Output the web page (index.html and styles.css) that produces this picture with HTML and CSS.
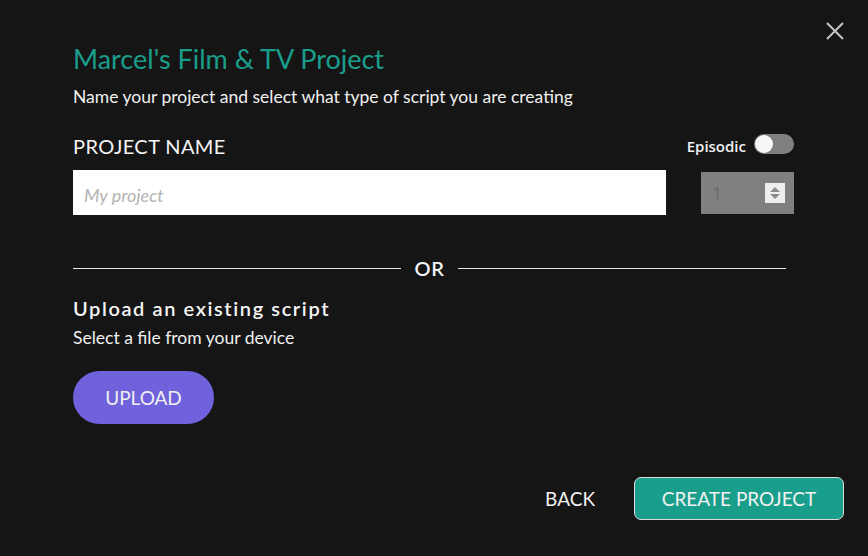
FILE: index.html
```html
<!DOCTYPE html>
<html lang="en">
<head>
<meta charset="utf-8">
<title>New project</title>
<link rel="stylesheet" href="styles.css">
</head>
<body>
<div class="dialog">
  <button class="close" aria-label="Close">
    <svg width="18" height="18" viewBox="0 0 18 18"><path d="M1 1L17 17M17 1L1 17" stroke="#c4c4c4" stroke-width="2" fill="none"/></svg>
  </button>
  <div class="content">
    <h1 class="title">Marcel's Film &amp; TV Project</h1>
    <p class="subtitle">Name your project and select what type of script you are creating</p>
    <div class="label-row">
      <span class="label">PROJECT NAME</span>
      <div class="episodic">
        <span class="episodic-text">Episodic</span>
        <span class="toggle"><span class="knob"></span></span>
      </div>
    </div>
    <div class="input-row">
      <div class="name-input"><span class="placeholder">My project</span></div>
      <div class="number-input">
        <span class="number">1</span>
        <svg class="spinner" width="20" height="20" viewBox="0 0 20 20"><rect width="20" height="20" fill="#eeeeee"/><path d="M5 9L10 4L15 9Z" fill="#8c8c8c"/><path d="M5 11L10 16L15 11Z" fill="#8c8c8c"/></svg>
      </div>
    </div>
    <div class="divider">
      <span class="line"></span>
      <span class="or">OR</span>
      <span class="line"></span>
    </div>
    <h2 class="upload-title">Upload an existing script</h2>
    <p class="upload-sub">Select a file from your device</p>
    <button class="upload-btn">UPLOAD</button>
  </div>
  <div class="footer">
    <button class="back-btn">BACK</button>
    <button class="create-btn">CREATE PROJECT</button>
  </div>
</div>
</body>
</html>
```
FILE: styles.css
```css
html, body {
  margin: 0;
  padding: 0;
  background: #151515;
}
body {
  font-family: Lato, "Open Sans", sans-serif;
  color: #f2f2f2;
}
.dialog {
  position: relative;
  box-sizing: border-box;
  width: 868px;
  height: 556px;
  background: #151515;
  display: flex;
  flex-direction: column;
}
.close {
  position: absolute;
  top: 22px;
  right: 24px;
  width: 18px;
  height: 18px;
  padding: 0;
  border: 0;
  background: none;
  display: flex;
}
.content {
  display: flex;
  flex-direction: column;
  align-items: flex-start;
  padding: 43px 74px 0 73px;
}
.title {
  margin: 0;
  font-size: 27px;
  line-height: 32px;
  font-weight: 400;
  color: #1a9e8c;
}
.subtitle {
  margin: 12px 0 0;
  font-size: 17.5px;
  line-height: 20px;
  color: #f0f0f0;
}
.label-row {
  align-self: stretch;
  margin-top: 27px;
  display: flex;
  align-items: center;
  justify-content: space-between;
  height: 24px;
}
.label {
  font-size: 20px;
  line-height: 24px;
  letter-spacing: 0.4px;
  color: #f4f4f4;
}
.episodic {
  display: flex;
  align-items: center;
  gap: 8px;
  margin-top: -4px;
}
.episodic-text {
  font-family: "Open Sans", sans-serif;
  font-weight: 600;
  font-size: 15px;
  line-height: 20px;
  color: #f0f0f0;
  margin-top: 4px;
}
.toggle {
  width: 40px;
  height: 20px;
  border-radius: 10px;
  background: #808080;
  display: flex;
  align-items: center;
  padding-left: 1px;
  box-sizing: border-box;
}
.knob {
  width: 18px;
  height: 18px;
  border-radius: 50%;
  background: #f7f7f7;
}
.input-row {
  align-self: stretch;
  margin-top: 12px;
  display: flex;
  align-items: center;
  gap: 35px;
}
.name-input {
  flex: 1;
  height: 45px;
  box-sizing: border-box;
  background: #ffffff;
  display: flex;
  align-items: center;
  padding: 5px 0 0 11px;
}
.placeholder {
  font-style: italic;
  font-size: 18px;
  color: #b3b3b3;
}
.number-input {
  width: 93px;
  height: 42px;
  background: #808080;
  box-sizing: border-box;
  display: flex;
  align-items: center;
  justify-content: space-between;
  padding: 0 9px 0 11px;
}
.number {
  font-family: "Open Sans", sans-serif;
  font-size: 18px;
  color: #6a6a6a;
}
.spinner {
  display: block;
}
.divider {
  align-self: stretch;
  margin: 41px 8px 0 0;
  display: flex;
  align-items: center;
  gap: 14px;
  height: 24px;
}
.line {
  flex: 1;
  height: 1px;
  background: #e8e8e8;
}
.or {
  font-size: 20px;
  font-weight: 600;
  line-height: 24px;
  letter-spacing: 0.5px;
  color: #f4f4f4;
}
.upload-title {
  margin: 16px 0 0;
  font-size: 20px;
  line-height: 24px;
  font-weight: 600;
  letter-spacing: 1.6px;
  color: #f4f4f4;
}
.upload-sub {
  margin: 8px 0 0;
  font-size: 17.5px;
  line-height: 20px;
  color: #f0f0f0;
}
.upload-btn {
  margin-top: 23px;
  width: 141px;
  height: 53px;
  border: 0;
  border-radius: 27px;
  background: #7062dc;
  color: #f0f0f0;
  font-family: Lato, sans-serif;
  font-size: 19px;
  padding: 0;
}
.footer {
  margin-top: auto;
  display: flex;
  justify-content: flex-end;
  align-items: center;
  gap: 39px;
  padding: 0 24px 36px 0;
}
.back-btn {
  border: 0;
  background: none;
  padding: 0;
  font-family: Lato, sans-serif;
  font-size: 19px;
  color: #f2f2f2;
}
.create-btn {
  width: 210px;
  height: 43px;
  box-sizing: border-box;
  border: 1px solid #dcdcdc;
  border-radius: 7px;
  background: #1a9e8c;
  color: #f2f2f2;
  font-family: Lato, sans-serif;
  font-size: 19px;
  padding: 0;
}
```
